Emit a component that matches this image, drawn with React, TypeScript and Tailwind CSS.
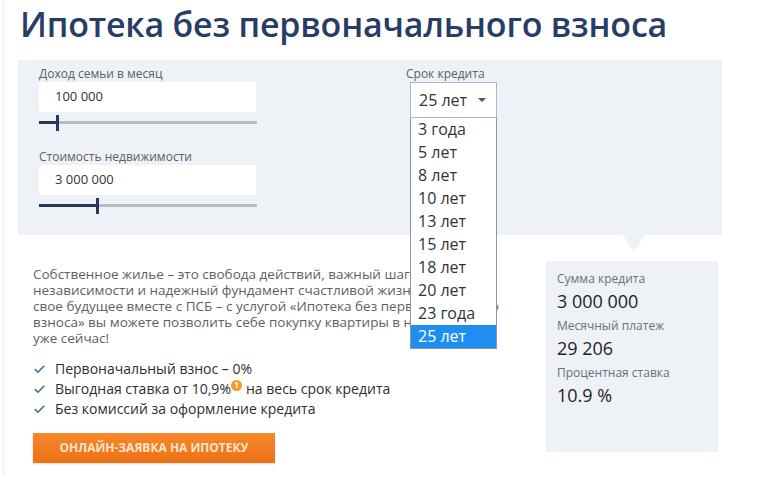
import { Check } from 'lucide-react';

const TERMS = ['3 года', '5 лет', '8 лет', '10 лет', '13 лет', '15 лет', '18 лет', '20 лет', '23 года', '25 лет'];

const Slider = ({ fill }: { fill: number }) => (
  <div className="relative mt-[4px] h-[14px] w-[218px]">
    <div className="absolute left-0 right-0 top-[5px] h-[3px] bg-[#b9bcc1]" />
    <div className="absolute left-0 top-[5px] h-[3px] bg-[#24395c]" style={{ width: fill }} />
    <div className="absolute top-[-1px] h-[16px] w-[3px] bg-[#24395c]" style={{ left: fill - 1 }} />
  </div>
);

const Field = ({ label, value, fill }: { label: string; value: string; fill: number }) => (
  <div className="flex flex-col">
    <span className="text-[12px] leading-[14px] text-[#5b5f66]">{label}</span>
    <div className="mt-[1px] flex h-[30px] w-[217px] items-center bg-white pl-[16px] text-[13px] text-[#333]">
      {value}
    </div>
    <Slider fill={fill} />
  </div>
);

const Stat = ({ label, value }: { label: string; value: string }) => (
  <div className="flex flex-col">
    <span className="text-[12px] leading-[16px] text-[#6b7078]">{label}</span>
    <span className="text-[18px] leading-[28px] text-[#1f2326]">{value}</span>
  </div>
);

export default function App() {
  return (
    <div className="flex h-[477px] w-[773px] overflow-hidden bg-white font-['Open_Sans',sans-serif]">
      <div className="w-[4px] shrink-0 border-r border-[#eceef1]" />
      <div className="flex w-full flex-col">
        <h1 className="ml-[16px] h-[60px] pt-[2px] font-['Open_Sans',sans-serif] text-[34px] font-semibold leading-[44px] tracking-[-0.2px] text-[#273d66]">
          Ипотека без первоначального взноса
        </h1>

        <div className="relative ml-[14px] flex h-[175px] w-[704px] bg-[#eef1f6] pl-[21px] pt-[7px]">
          <div className="flex flex-col gap-[20px]">
            <Field label="Доход семьи в месяц" value="100 000" fill={18} />
            <Field label="Стоимость недвижимости" value="3 000 000" fill={58} />
          </div>

          <div className="ml-[149px] flex flex-col">
            <span className="text-[12px] leading-[14px] text-[#5b5f66]">Срок кредита</span>
            <div className="relative ml-[4px] mt-[1px] w-[87px]">
              <div className="flex h-[36px] items-center justify-between border border-[#a9b8cc] bg-white pl-[8px] pr-[10px] text-[16px] text-[#333]">
                <span>25 лет</span>
                <span className="h-0 w-0 border-x-[4px] border-t-[4px] border-x-transparent border-t-[#555]" />
              </div>
              <ul className="absolute left-0 top-[36px] z-10 w-[87px] border border-t-0 border-[#8d96a3] bg-white">
                {TERMS.map(t => (
                  <li
                    key={t}
                    className={
                      t === '25 лет'
                        ? 'h-[23px] bg-[#1e8ff0] pl-[7px] text-[16px] leading-[23px] text-white'
                        : 'h-[23px] pl-[7px] text-[16px] leading-[23px] text-[#333]'
                    }
                  >
                    {t}
                  </li>
                ))}
              </ul>
            </div>
          </div>

          <div className="absolute left-[605px] top-[175px] h-0 w-0 border-x-[11px] border-t-[17px] border-x-transparent border-t-[#eef1f6]" />
        </div>

        <div className="flex">
          <div className="ml-[29px] flex w-[484px] flex-col pt-[31px]">
            <p className="text-[13.5px] leading-[16px] text-[#5b5f66]">
              Собственное жилье – это свобода действий, важный шаг к<br />
              независимости и надежный фундамент счастливой жизни. Начните<br />
              свое будущее вместе с ПСБ – с услугой «Ипотека без первоначального<br />
              взноса» вы можете позволить себе покупку квартиры в новостройке<br />
              уже сейчас!
            </p>
            <ul className="mt-[13px] flex flex-col text-[14px] leading-[20px] text-[#2b2f33]">
              <li className="flex items-center gap-[9px]">
                <Check size={13} strokeWidth={3} className="text-[#3f6a96]" />
                Первоначальный взнос – 0%
              </li>
              <li className="flex items-center gap-[9px]">
                <Check size={13} strokeWidth={3} className="text-[#3f6a96]" />
                <span>
                  Выгодная ставка от 10,9%
                  <span className="relative top-[-6px] mr-[4px] inline-flex h-[11px] w-[11px] items-center justify-center rounded-full bg-[#f39c1f] text-[8px] font-bold leading-none text-white">
                    1
                  </span>
                  на весь срок кредита
                </span>
              </li>
              <li className="flex items-center gap-[9px]">
                <Check size={13} strokeWidth={3} className="text-[#3f6a96]" />
                Без комиссий за оформление кредита
              </li>
            </ul>
            <button className="mt-[14px] flex h-[30px] w-[242px] items-center justify-center bg-gradient-to-b from-[#f7892a] to-[#ec7014] text-[12px] font-bold text-[#fde6cf] shadow-[0_1px_2px_rgba(0,0,0,0.15)]">
              ОНЛАЙН-ЗАЯВКА НА ИПОТЕКУ
            </button>
          </div>

          <div className="ml-[29px] mt-[26px] flex h-[191px] w-[172px] flex-col gap-[3px] bg-[#eef1f6] pl-[11px] pt-[10px]">
            <Stat label="Сумма кредита" value="3 000 000" />
            <Stat label="Месячный платеж" value="29 206" />
            <Stat label="Процентная ставка" value="10.9 %" />
          </div>
        </div>
      </div>
    </div>
  );
}
